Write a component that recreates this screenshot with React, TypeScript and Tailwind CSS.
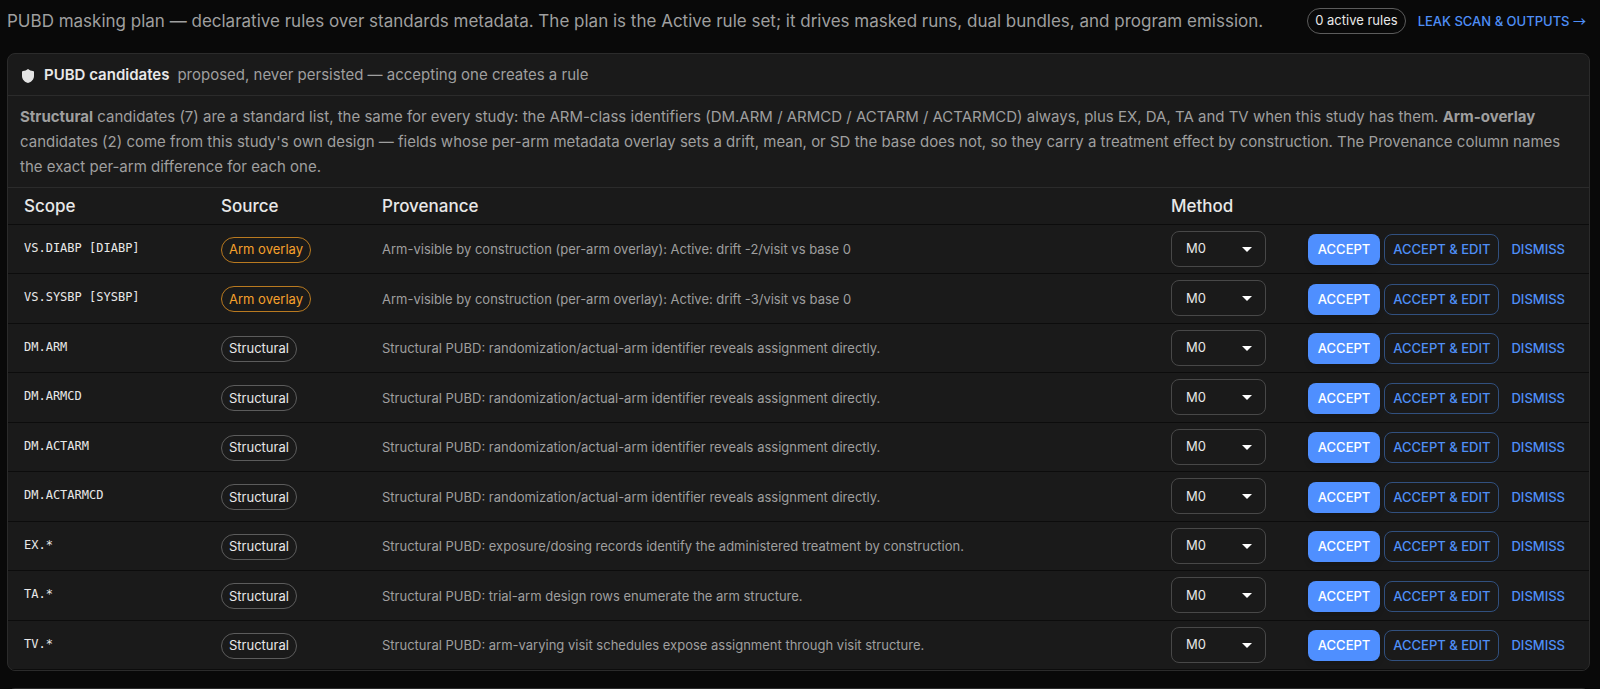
type Candidate = {
    scope: string;
    source: "Arm overlay" | "Structural";
    provenance: string;
};

const armIdentifier = "Structural PUBD: randomization/actual-arm identifier reveals assignment directly.";

const candidates: Candidate[] = [
    {
        scope: "VS.DIABP [DIABP]",
        source: "Arm overlay",
        provenance: "Arm-visible by construction (per-arm overlay): Active: drift -2/visit vs base 0"
    },
    {
        scope: "VS.SYSBP [SYSBP]",
        source: "Arm overlay",
        provenance: "Arm-visible by construction (per-arm overlay): Active: drift -3/visit vs base 0"
    },
    { scope: "DM.ARM", source: "Structural", provenance: armIdentifier },
    { scope: "DM.ARMCD", source: "Structural", provenance: armIdentifier },
    { scope: "DM.ACTARM", source: "Structural", provenance: armIdentifier },
    { scope: "DM.ACTARMCD", source: "Structural", provenance: armIdentifier },
    {
        scope: "EX.*",
        source: "Structural",
        provenance: "Structural PUBD: exposure/dosing records identify the administered treatment by construction."
    },
    {
        scope: "TA.*",
        source: "Structural",
        provenance: "Structural PUBD: trial-arm design rows enumerate the arm structure."
    },
    {
        scope: "TV.*",
        source: "Structural",
        provenance: "Structural PUBD: arm-varying visit schedules expose assignment through visit structure."
    }
];

function SourceChip({ source }: { source: Candidate["source"] }) {
    const tone = source === "Arm overlay" ? "border-[#b97a20] text-[#f5a02c]" : "border-[#5c5c5c] text-[#e8e8e8]";
    return (
        <span className={`flex h-[26px] w-fit items-center rounded-full border px-[7px] text-[13px] ${tone}`}>
            {source}
        </span>
    );
}

function MethodSelect({ scope }: { scope: string }) {
    return (
        <div className="relative h-9 w-[95px]">
            <select
                aria-label={`Method for ${scope}`}
                className="h-9 w-full appearance-none rounded-lg border border-[#484848] bg-transparent pl-3.5 pr-8 text-[13px] text-[#e8e8e8]"
                defaultValue="M0"
            >
                <option>M0</option>
                <option>M1</option>
                <option>M2</option>
            </select>
            <svg viewBox="0 0 10 5" className="pointer-events-none absolute right-3.5 top-4 h-[5px] w-2.5" fill="#fff">
                <path d="M0 0h10L5 5z" />
            </svg>
        </div>
    );
}

export default function App() {
    return (
        <main className="h-screen overflow-hidden bg-[#090909] pl-[7px] pr-2.5 font-['Inter',sans-serif] text-[#e8e8e8]">
            <header className="flex h-[53px] items-start pt-2">
                <p className="flex-1 text-[17px] leading-[26px] text-[#9f9f9f]">
                    PUBD masking plan — declarative rules over standards metadata. The plan is the Active rule set; it
                    drives masked runs, dual bundles, and program emission.
                </p>
                <span className="flex h-[26px] items-center rounded-full border border-[#5c5c5c] px-[7px] text-[13px]">
                    0 active rules
                </span>
                <a href="#outputs" className="ml-3 mr-1 text-[13px] leading-[26px] font-medium text-[#4f8ff7]">
                    LEAK SCAN &amp; OUTPUTS <span className="font-['Noto_Sans_CJK_JP',sans-serif]">→</span>
                </a>
            </header>

            <section className="overflow-hidden rounded-lg border border-[#2b2b2b] bg-[#1a1a1a]">
                <div className="flex h-[42px] items-center border-b border-[#2b2b2b] px-3 pt-0.5">
                    <svg viewBox="0 0 12 14" className="ml-0.5 h-3.5 w-3" fill="#e4e4e4">
                        <path d="M6 0C7.5 1.2 9.2 1.9 11 2.1Q12 2.2 12 3.2V7C12 10.4 9.6 12.8 6 14 2.4 12.8 0 10.4 0 7V3.2Q0 2.2 1 2.1C2.8 1.9 4.5 1.2 6 0Z" />
                    </svg>
                    <h2 className="ml-2.5 text-[15px] font-semibold">PUBD candidates</h2>
                    <span className="ml-2 text-[15px] text-[#9f9f9f]">
                        proposed, never persisted — accepting one creates a rule
                    </span>
                </div>

                <p className="border-b border-[#2b2b2b] px-3 py-2 text-[15px] leading-[25px] text-[#9f9f9f]">
                    <strong>Structural</strong> candidates (7) are a standard list, the same for every study: the
                    ARM-class identifiers (DM.ARM / ARMCD / ACTARM / ACTARMCD) always, plus EX, DA, TA and TV when this
                    study has them. <strong>Arm-overlay</strong> candidates (2) come from this study's own design —
                    fields whose per-arm metadata overlay sets a drift, mean, or SD the base does not, so they carry a
                    treatment effect by construction. The Provenance column names the exact per-arm difference for each
                    one.
                </p>

                <table className="h-[482px] w-full border-collapse text-left">
                    <thead>
                        <tr className="h-9 border-b border-[#0c0c0c] text-[17px]">
                            <th className="w-[197px] pt-0.5 pl-4 font-medium">Scope</th>
                            <th className="w-[161px] pt-0.5 pl-4 font-medium">Source</th>
                            <th className="pt-0.5 pl-4 font-medium">Provenance</th>
                            <th className="w-[127px] pt-0.5 pl-4 font-medium">Method</th>
                            <th aria-label="Actions" className="w-[307px]" />
                        </tr>
                    </thead>
                    <tbody>
                        {candidates.map((candidate) => (
                            <tr key={candidate.scope} className="border-b border-[#0c0c0c]">
                                <td className="pl-4 pb-0.5 font-['DejaVu_Sans_Mono',monospace] text-[12px]">
                                    {candidate.scope}
                                </td>
                                <td className="pt-0.5 pl-4">
                                    <SourceChip source={candidate.source} />
                                </td>
                                <td className="pt-0.5 pl-4 text-[13px] text-[#9f9f9f]">{candidate.provenance}</td>
                                <td className="pl-4">
                                    <MethodSelect scope={candidate.scope} />
                                </td>
                                <td className="pt-0.5 pr-4">
                                    <div className="flex items-center justify-end gap-1 text-[13px] font-medium text-[#4f8ff7]">
                                        <button className="h-[31px] rounded-lg bg-[#4f8fff] px-2.5 text-white shadow-md">
                                            ACCEPT
                                        </button>
                                        <button className="h-[31px] rounded-lg border border-[#31507f] px-2">
                                            ACCEPT &amp; EDIT
                                        </button>
                                        <button className="h-[31px] px-2">DISMISS</button>
                                    </div>
                                </td>
                            </tr>
                        ))}
                    </tbody>
                </table>
            </section>

            <section className="mt-[17px] h-10 rounded-lg border border-[#2b2b2b] bg-[#1a1a1a]" />
        </main>
    );
}
